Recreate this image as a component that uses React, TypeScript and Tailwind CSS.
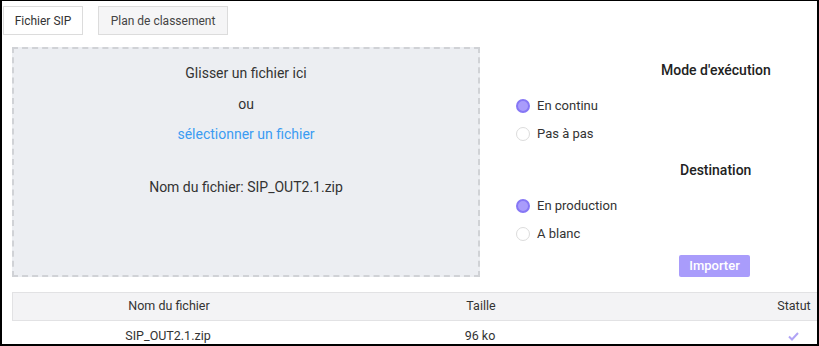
import React from "react";

function Radio({ checked, label }: { checked: boolean; label: string }) {
  return (
    <div className="flex items-center h-[14px]">
      <span
        className={
          checked
            ? "w-[14px] h-[14px] rounded-full border-2 border-[#8677f5] bg-[#a99cfb] box-border"
            : "w-[14px] h-[14px] rounded-full border border-[#dcdcdc] bg-white box-border"
        }
      />
      <span className="ml-[7px] text-[13px] text-[#333]">{label}</span>
    </div>
  );
}

export default function App() {
  return (
    <div
      className="w-[819px] h-[346px] overflow-hidden bg-white border-black border-t border-l-2 border-r-2 border-b-2 box-border"
      style={{ fontFamily: "Roboto, 'Noto Sans', sans-serif" }}
    >
      {/* Tabs */}
      <div className="flex pt-[5px] pl-[1px] gap-[15px]">
        <div className="w-[80px] h-[29px] flex items-center justify-center border border-[#dcdcdc] bg-white text-[12px] text-[#333] box-border">
          Fichier SIP
        </div>
        <div className="w-[130px] h-[29px] flex items-center justify-center border border-[#dcdcdc] bg-[#f5f5f6] text-[12px] text-[#444] box-border">
          Plan de classement
        </div>
      </div>

      {/* Main */}
      <div className="flex mt-[12px] pl-[10px]">
        <div className="w-[468px] h-[230px] border-2 border-dashed border-[#d0d2d6] bg-[#eceef2] box-border flex flex-col items-center text-[14px] text-[#333]">
          <div className="mt-[14px] leading-[20px]">Glisser un fichier ici</div>
          <div className="mt-[11px] leading-[20px]">ou</div>
          <div className="mt-[10px] leading-[20px] text-[#3b9cf2]">sélectionner un fichier</div>
          <div className="mt-[33px] leading-[20px]">Nom du fichier: SIP_OUT2.1.zip</div>
        </div>

        <div className="relative flex-1">
          <div className="absolute left-[181px] top-[13px] text-[14px] font-medium text-[#222] leading-[20px] whitespace-nowrap">
            Mode d'exécution
          </div>
          <div className="absolute left-[36px] top-[52px] flex flex-col gap-[14px]">
            <Radio checked label="En continu" />
            <Radio checked={false} label="Pas à pas" />
          </div>
          <div className="absolute left-[200px] top-[113px] text-[14px] font-medium text-[#222] leading-[20px] whitespace-nowrap">
            Destination
          </div>
          <div className="absolute left-[36px] top-[152px] flex flex-col gap-[14px]">
            <Radio checked label="En production" />
            <Radio checked={false} label="A blanc" />
          </div>
          <div className="absolute left-[199px] top-[208px] w-[71px] h-[22px] rounded-[2px] bg-[#a99cfb] text-white text-[13px] font-medium flex items-center justify-center">
            Importer
          </div>
        </div>
      </div>

      {/* Table */}
      <div className="ml-[10px] mt-[15px] text-[12.5px] text-[#333]">
        <div className="grid grid-cols-[312px_312px_133px_48px] h-[29px] items-center bg-[#f3f3f5] border border-r-0 border-[#e2e2e4] box-border">
          <div className="text-center">Nom du fichier</div>
          <div className="text-center">Taille</div>
          <div />
          <div className="text-center">Statut</div>
        </div>
        <div className="grid grid-cols-[312px_312px_133px_48px] h-[28px] pt-[3px] items-center">
          <div className="text-center">SIP_OUT2.1.zip</div>
          <div className="text-center">96 ko</div>
          <div />
          <div className="flex justify-center">
            <svg width="11" height="9" viewBox="0 0 11 9">
              <path d="M1 4.5 L4 7.5 L10 1" fill="none" stroke="#b1a4f6" strokeWidth="2" />
            </svg>
          </div>
        </div>
      </div>
    </div>
  );
}
